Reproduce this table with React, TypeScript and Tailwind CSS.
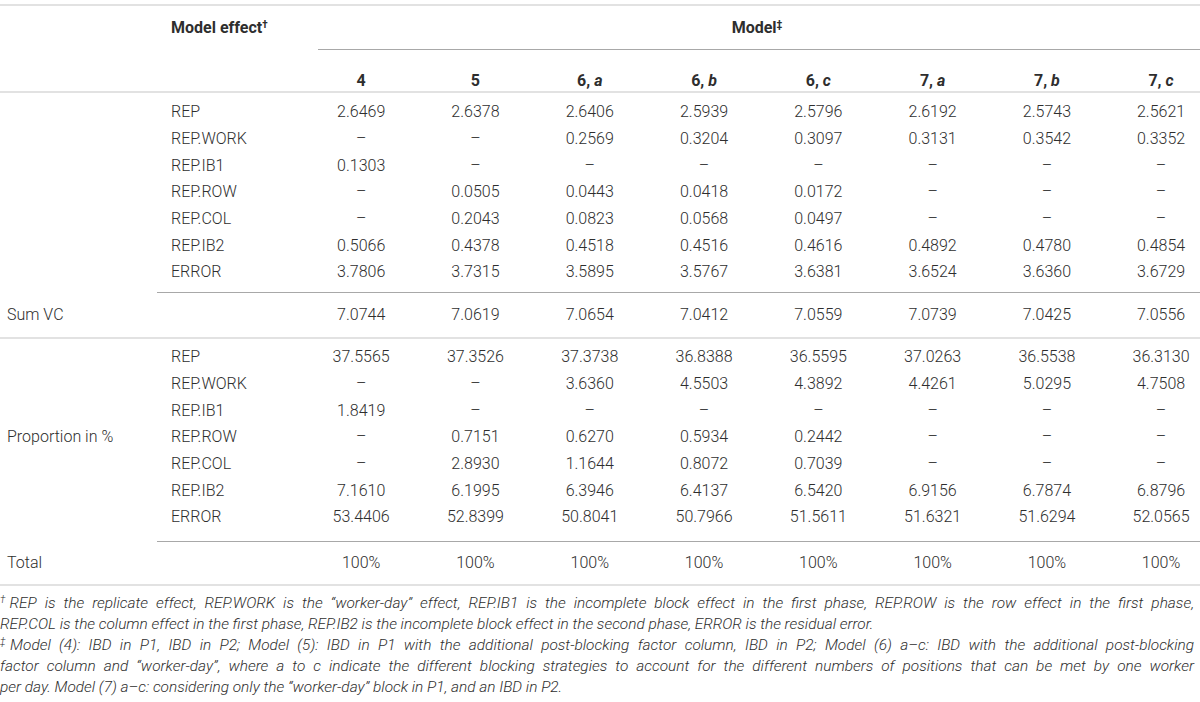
import React from "react";

const GRID = "grid grid-cols-[157px_147px_repeat(7,114.3px)_1fr]";

const D = "–";

const sec1: [string, string[]][] = [
  ["REP", ["2.6469", "2.6378", "2.6406", "2.5939", "2.5796", "2.6192", "2.5743", "2.5621"]],
  ["REP.WORK", [D, D, "0.2569", "0.3204", "0.3097", "0.3131", "0.3542", "0.3352"]],
  ["REP.IB1", ["0.1303", D, D, D, D, D, D, D]],
  ["REP.ROW", [D, "0.0505", "0.0443", "0.0418", "0.0172", D, D, D]],
  ["REP.COL", [D, "0.2043", "0.0823", "0.0568", "0.0497", D, D, D]],
  ["REP.IB2", ["0.5066", "0.4378", "0.4518", "0.4516", "0.4616", "0.4892", "0.4780", "0.4854"]],
  ["ERROR", ["3.7806", "3.7315", "3.5895", "3.5767", "3.6381", "3.6524", "3.6360", "3.6729"]],
];

const sumVC = ["7.0744", "7.0619", "7.0654", "7.0412", "7.0559", "7.0739", "7.0425", "7.0556"];

const sec3: [string, string[]][] = [
  ["REP", ["37.5565", "37.3526", "37.3738", "36.8388", "36.5595", "37.0263", "36.5538", "36.3130"]],
  ["REP.WORK", [D, D, "3.6360", "4.5503", "4.3892", "4.4261", "5.0295", "4.7508"]],
  ["REP.IB1", ["1.8419", D, D, D, D, D, D, D]],
  ["REP.ROW", [D, "0.7151", "0.6270", "0.5934", "0.2442", D, D, D]],
  ["REP.COL", [D, "2.8930", "1.1644", "0.8072", "0.7039", D, D, D]],
  ["REP.IB2", ["7.1610", "6.1995", "6.3946", "6.4137", "6.5420", "6.9156", "6.7874", "6.8796"]],
  ["ERROR", ["53.4406", "52.8399", "50.8041", "50.7966", "51.5611", "51.6321", "51.6294", "52.0565"]],
];

const total = Array(8).fill("100%");

function Row({ label, effect, values, h = "h-[26.7px]" }: { label?: string; effect?: string; values: string[]; h?: string }) {
  return (
    <div className={`${GRID} ${h} items-center`}>
      <div className="pl-[7px] whitespace-nowrap">{label}</div>
      <div className="pl-[14px] whitespace-nowrap">{effect}</div>
      {values.map((v, i) => (
        <div key={i} className={`text-center whitespace-nowrap ${i === 7 ? "pl-[18px]" : ""}`}>
          {v}
        </div>
      ))}
    </div>
  );
}

const heads: [string, string][] = [
  ["4", ""],
  ["5", ""],
  ["6, ", "a"],
  ["6, ", "b"],
  ["6, ", "c"],
  ["7, ", "a"],
  ["7, ", "b"],
  ["7, ", "c"],
];

export default function App() {
  return (
    <div className="w-[1200px] h-[702px] bg-white overflow-hidden font-['Roboto','Liberation_Sans',Arial,sans-serif] font-light text-[16px] leading-[22px] text-[#2e2e2e] pt-[4px]">
      {/* header */}
      <div className="border-t-2 border-[#e2e2e2]">
        <div className="grid grid-cols-[157px_147px_1fr]">
          <div />
          <div className="pl-[14px] pt-[11px] font-bold whitespace-nowrap">
            Model effect<sup className="text-[10px]">†</sup>
          </div>
          <div className="flex flex-col">
            <div className="h-[43px] pt-[11px] text-center font-bold pl-[10px]">
              Model<sup className="text-[10px]">‡</sup>
            </div>
            <div className="ml-[14px] border-t border-[#a8a8a8]" />
          </div>
        </div>
        <div className={`${GRID} h-[41px] pt-[20px]`}>
          <div />
          <div />
          {heads.map(([n, l], i) => (
            <div key={i} className={`text-center font-bold ${i === 7 ? "pl-[18px]" : ""}`}>
              {n}
              {l && <i>{l}</i>}
            </div>
          ))}
        </div>
      </div>
      {/* section 1 */}
      <div className="border-t-2 border-[#e2e2e2] pt-[6px] pb-[6px]">
        {sec1.map(([e, v]) => (
          <Row key={e} effect={e} values={v} />
        ))}
      </div>
      <div className="ml-[157px] border-t border-[#a8a8a8]" />
      <Row label="Sum VC" values={sumVC} h="h-[44px]" />
      {/* section 3 */}
      <div className="border-t-2 border-[#e2e2e2] pt-[5px] pb-[10px]">
        {sec3.map(([e, v], i) => (
          <Row key={e} effect={e} values={v} label={i === 3 ? "Proportion in %" : undefined} />
        ))}
      </div>
      <div className="ml-[157px] border-t border-[#a8a8a8]" />
      <Row label="Total" values={total} h="h-[42px]" />
      <div className="border-t-2 border-[#e2e2e2] pt-[7px] pr-[6px] italic text-[15.4px] leading-[21px]">
        <div className="text-justify [text-align-last:justify] whitespace-nowrap">
          <sup className="text-[10px]">†</sup>REP is the replicate effect, REP.WORK is the “worker-day” effect, REP.IB1 is the incomplete block effect in the first phase, REP.ROW is the row effect in the first phase,
        </div>
        <div className="whitespace-nowrap">
          REP.COL is the column effect in the first phase, REP.IB2 is the incomplete block effect in the second phase, ERROR is the residual error.
        </div>
        <div className="text-justify [text-align-last:justify] whitespace-nowrap">
          <sup className="text-[10px]">‡</sup>Model (4): IBD in P1, IBD in P2; Model (5): IBD in P1 with the additional post-blocking factor column, IBD in P2; Model (6) a–c: IBD with the additional post-blocking
        </div>
        <div className="text-justify [text-align-last:justify] whitespace-nowrap">
          factor column and “worker-day”, where a to c indicate the different blocking strategies to account for the different numbers of positions that can be met by one worker
        </div>
        <div className="whitespace-nowrap">
          per day. Model (7) a–c: considering only the “worker-day” block in P1, and an IBD in P2.
        </div>
      </div>
    </div>
  );
}
